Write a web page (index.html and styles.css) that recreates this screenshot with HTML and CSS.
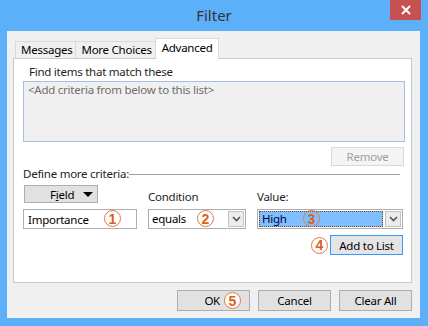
FILE: index.html
```html
<!DOCTYPE html>
<html lang="en">
<head>
<meta charset="UTF-8">
<title>Filter</title>
<link rel="stylesheet" href="styles.css">
</head>
<body>
<div class="window">
  <div class="titlebar">
    <span class="title">Filter</span>
    <button class="close" aria-label="Close">
      <svg width="10" height="10" viewBox="0 0 10 10"><path d="M1 1L9 9M9 1L1 9" stroke="#fff" stroke-width="2"/></svg>
    </button>
  </div>
  <div class="client">
    <div class="tabs">
      <div class="tab">Messages</div>
      <div class="tab">More Choices</div>
      <div class="tab active">Advanced</div>
    </div>
    <div class="panel">
      <div class="find-label">Find items that match these</div>
      <div class="listbox">&lt;Add criteria from below to this list&gt;</div>
      <div class="remove-row">
        <button class="btn disabled">Remove</button>
      </div>
      <div class="define">
        <span>Define more criteria:</span>
        <div class="rule"></div>
      </div>
      <div class="criteria">
        <button class="btn field-btn"><span>F<u>i</u>eld</span><span class="tri"></span></button>
        <div class="lbl">Condition</div>
        <div class="lbl">Value:</div>

        <div class="textbox">Importance<span class="num n1">1</span></div>
        <div class="combo">
          <div class="combo-text">equals</div>
          <div class="arrow"><svg width="9" height="6" viewBox="0 0 9 6"><path d="M1 1L4.5 4.5L8 1" fill="none" stroke="#555" stroke-width="1.6"/></svg></div>
          <span class="num n2">2</span>
        </div>
        <div class="combo">
          <div class="combo-text selected">High</div>
          <div class="arrow"><svg width="9" height="6" viewBox="0 0 9 6"><path d="M1 1L4.5 4.5L8 1" fill="none" stroke="#555" stroke-width="1.6"/></svg></div>
          <span class="num n3">3</span>
        </div>
      </div>
      <div class="add-row">
        <span class="num">4</span>
        <button class="btn default">Add to List</button>
      </div>
    </div>
    <div class="footer">
      <button class="btn wide ok">OK<span class="num">5</span></button>
      <button class="btn wide">Cancel</button>
      <button class="btn wide">Clear All</button>
    </div>
  </div>
</div>
</body>
</html>
```

FILE: styles.css
```css
body {
  margin: 0;
  padding: 0;
  font-family: "Noto Sans", "Open Sans", sans-serif;
  font-size: 11.5px;
  letter-spacing: -0.25px;
  color: #000;
}

.window {
  width: 428px;
  height: 326px;
  background-color: #5cb0fa;
  display: flex;
  flex-direction: column;
}

.titlebar {
  height: 31px;
  position: relative;
  display: flex;
  align-items: center;
  justify-content: center;
}

.title {
  font-size: 15px;
  letter-spacing: 0;
  color: #333;
  margin-top: -1px;
}

.close {
  position: absolute;
  top: 0;
  right: 7px;
  width: 31px;
  height: 20px;
  border: none;
  padding: 0;
  background-color: #c75050;
  display: flex;
  align-items: center;
  justify-content: center;
}

.client {
  margin: 0 8px 8px 7px;
  flex: 1;
  background-color: #f0f0f0;
  padding: 7px 8px 0 6px;
  display: flex;
  flex-direction: column;
}

.tabs {
  display: flex;
  align-items: flex-end;
  padding-left: 2px;
  height: 20px;
}

.tab {
  height: 16px;
  line-height: 16px;
  padding: 0 3px 0 5px;
  border: 1px solid #d9d9d9;
  border-bottom: none;
  background-color: #f0f0f0;
  margin-right: -1px;
}

.tab.active {
  height: 20px;
  line-height: 18px;
  background-color: #fff;
  padding: 0 5px 0 6px;
  position: relative;
  z-index: 1;
  margin-bottom: -1px;
}

.panel {
  height: 223px;
  background-color: #fff;
  border: 1px solid #c8c8c8;
  padding: 0 6px 0 9px;
  display: flex;
  flex-direction: column;
}

.find-label {
  margin: 4px 0 0 6px;
  height: 17px;
  line-height: 17px;
  color: #1e1e1e;
}

.listbox {
  height: 59px;
  border: 1px solid #a7bfda;
  background-color: #f0f0f0;
  color: #6d6d6d;
  padding: 0 4px;
  line-height: 16px;
  margin-top: 1px;
}

.remove-row {
  display: flex;
  justify-content: flex-end;
  margin-top: 5px;
  padding-right: 1px;
}

.btn {
  font-family: inherit;
  font-size: 11.5px;
  letter-spacing: -0.25px;
  color: #000;
  background-color: #e1e1e1;
  border: 1px solid #adadad;
  padding: 0;
  height: 20px;
  width: 73px;
}

.btn.disabled {
  height: 19px;
  background-color: #f4f4f4;
  border-color: #d9d9d9;
  color: #a0a0a0;
}

.define {
  display: flex;
  align-items: center;
  height: 14px;
  padding-right: 5px;
}

.define span {
  color: #1e1e1e;
}

.rule {
  flex: 1;
  height: 1px;
  background-color: #a0a0a0;
  margin-top: 2px;
}

.criteria {
  display: grid;
  grid-template-columns: 114px 98px 146px;
  column-gap: 11px;
  row-gap: 5px;
  align-items: end;
  margin-top: 5px;
}

.field-btn {
  width: 74px;
  height: 18px;
  display: flex;
  align-items: center;
  justify-content: space-between;
  padding: 0 4px 0 25px;
  align-self: start;
  margin-left: 1px;
  margin-bottom: 1px;
}

.tri {
  width: 0;
  height: 0;
  border-left: 5px solid transparent;
  border-right: 5px solid transparent;
  border-top: 5px solid #000;
}

.lbl {
  color: #1e1e1e;
  line-height: 15px;
}

.textbox,
.combo {
  height: 18px;
  border: 1px solid #abadb3;
  background-color: #fff;
  position: relative;
  display: flex;
  align-items: center;
}

.textbox {
  padding-left: 4px;
}

.combo-text {
  flex: 1;
  height: 16px;
  line-height: 16px;
  padding-left: 3px;
}

.combo-text.selected {
  background-color: #80bfff;
  color: #00003c;
  outline: 1px dotted #7a4a1a;
  outline-offset: -1px;
  margin: 0 2px 0 1px;
}

.arrow {
  width: 16px;
  height: 16px;
  border: 1px solid #c4c4c4;
  background-color: #ececec;
  display: flex;
  align-items: center;
  justify-content: center;
  box-sizing: border-box;
  margin-right: 1px;
}

.num {
  display: inline-flex;
  align-items: center;
  justify-content: center;
  box-sizing: border-box;
  width: 17px;
  height: 17px;
  border: 1.6px solid #e8773a;
  border-radius: 50%;
  background-color: #fff;
  color: #d9621c;
  font-family: "Liberation Sans", Arial, sans-serif;
  font-weight: bold;
  font-size: 14px;
  letter-spacing: 0;
  line-height: 14px;
}

.n1 {
  position: absolute;
  left: 80px;
  top: 0;
}

.n2 {
  position: absolute;
  left: 48px;
  top: 0;
}

.n3 {
  position: absolute;
  left: 45px;
  top: 0;
  background-color: transparent;
}

.add-row {
  display: flex;
  justify-content: flex-end;
  align-items: center;
  gap: 2px;
  margin-top: 6px;
  padding-right: 2px;
}

.btn.default {
  border-color: #3399ff;
  background-color: #e5e5e5;
  height: 20px;
}

.footer {
  display: flex;
  justify-content: flex-end;
  gap: 8px;
  margin-top: 7px;
}

.btn.wide {
  width: 73px;
  height: 21px;
  display: flex;
  align-items: center;
  justify-content: center;
}

.btn.ok {
  justify-content: flex-end;
  gap: 4px;
  padding-right: 8px;
}
```
